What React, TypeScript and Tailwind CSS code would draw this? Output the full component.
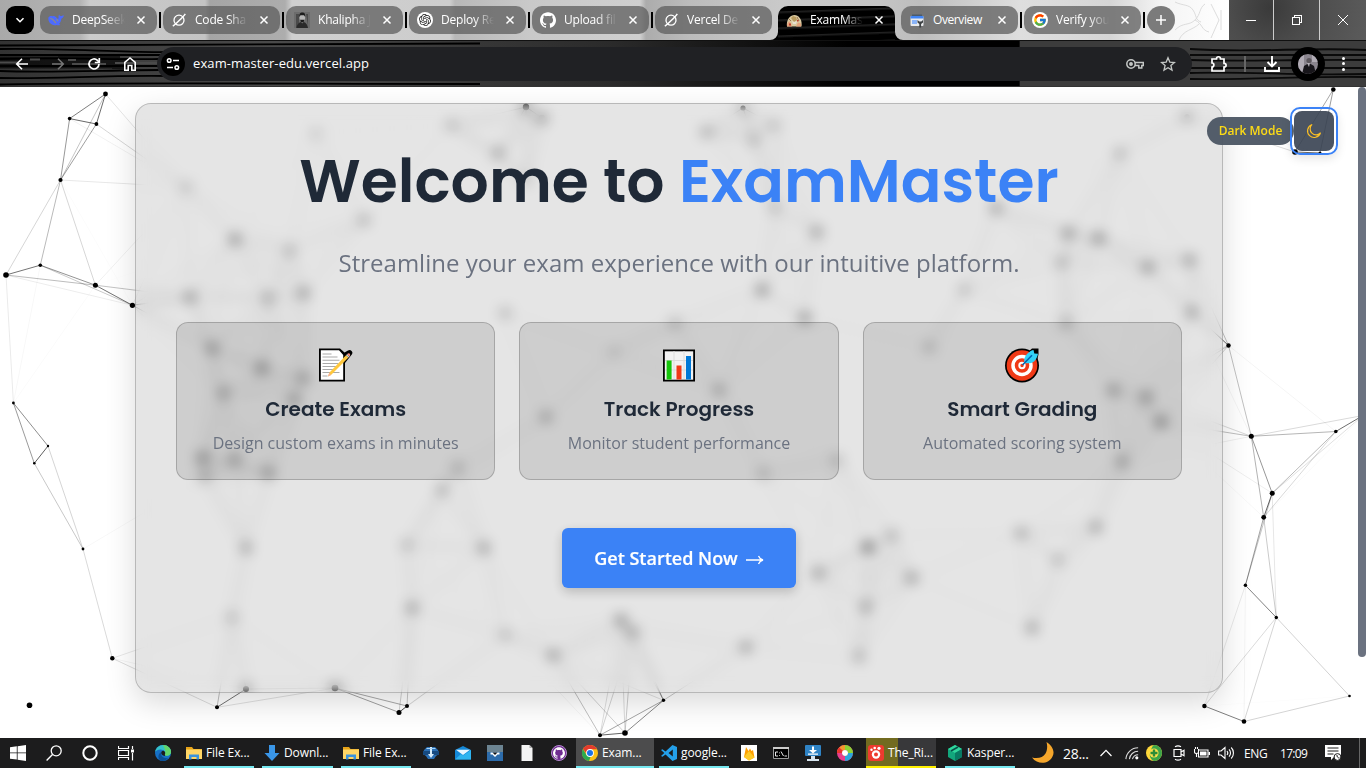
import React from "react";
import { SiGithub, SiOpenai } from "react-icons/si";
import { FcGoogle } from "react-icons/fc";

/* ---------- particle network ---------- */

type P = [number, number, number];

const points: P[] = [
  [105.5, 94, 2.4], [69.6, 118.6, 1.8], [96.4, 124, 1.9], [60.5, 180, 2.1], [6, 275, 2.8],
  [40.3, 265.2, 1.8], [95.4, 285.2, 2.5], [132.4, 305.3, 2.6], [13.4, 403, 1.4], [48, 446, 1.2],
  [34.3, 463.3, 1.3], [83, 549, 1.4], [112.3, 658.3, 2.2], [217, 707.3, 2], [399, 712.4, 2.5],
  [407, 706, 2], [600, 735.2, 2], [625, 733, 2.8], [663.5, 700.3, 1.7], [1204.4, 706, 2.2],
  [1244, 721.5, 2.3], [1349.5, 696, 1.3], [1276.3, 617.5, 1.7], [1245.4, 585.3, 1.7], [1263.7, 517.3, 2.4],
  [1272.2, 493.2, 2.5], [1251.3, 436.3, 2.5], [1335.8, 431.5, 1.8], [1363, 415.5, 2.4], [1228.5, 345.5, 2.2],
  [1333.3, 89.5, 2.3], [1295, 152, 2.8], [1320, 153, 1.5],
  [186, 187, 1.6], [235, 239, 2.8], [316, 133, 1.4], [451, 125, 1.8], [526, 107, 2.6], [542, 118, 2.6],
  [498, 153, 2.4], [364, 220, 2.1], [290, 250, 1.9], [190, 297, 2.6], [268, 298, 2.2], [304, 293, 2.6],
  [212, 348, 2.6], [262, 368, 3], [304, 378, 2.5], [223, 393, 2.5], [295, 400, 2.5], [505, 313, 2],
  [526, 180, 1.6], [675, 323, 2], [614, 352, 1.5], [706, 132, 2.2], [743, 108, 2], [775, 125, 1.6],
  [754, 140, 1.9], [775, 208, 1.8], [817, 232, 2.6], [762, 290, 3], [805, 318, 3], [996, 208, 2.6],
  [1068, 233, 2.7], [1099, 238, 2.9], [1061, 263, 1.9], [1148, 267, 2.8], [1190, 260, 2.6], [1120, 153, 2],
  [1187, 117, 2.1], [1192, 312, 2.6], [1066, 323, 2.2], [964, 290, 1.8], [929, 347, 2], [719, 390, 2.4],
  [1113, 390, 2.6], [1146, 397, 2.8], [202, 458, 2.8], [235, 460, 2.5], [269, 473, 2.6], [204, 477, 2],
  [458, 467, 2], [442, 490, 2.2], [246, 548, 2.5], [232, 617, 1.9], [412, 608, 2.6], [407, 545, 1.9],
  [484, 548, 2.6], [621, 620, 2.9], [633, 632, 2.5], [553, 655, 2.7], [505, 635, 1.8], [246, 689, 2.4],
  [335, 688, 2.7], [546, 417, 2.5], [868, 547, 3.6], [892, 535, 2], [818, 573, 2.6], [912, 578, 2.6],
  [866, 607, 2.5], [859, 657, 2.2], [746, 647, 2.6], [1021, 533, 2.3], [1058, 560, 2], [1096, 527, 2.6],
  [1032, 628, 2.6], [1122, 462, 2.6], [1161, 422, 3.2], [763, 473, 1.9], [837, 460, 1.9],
];

const REACH = 150;

const inPanel = ([x, y]: P) => x > 135 && x < 1223 && y < 693;

const links = points.flatMap((a, i) =>
  points.slice(i + 1).flatMap((b) => {
    const d = Math.hypot(a[0] - b[0], a[1] - b[1]);
    const strength = inPanel(a) && inPanel(b) ? 0.5 : 0.75;
    return d < REACH ? [{ a, b, o: Math.pow(1 - d / REACH, 1.15) * strength }] : [];
  })
);

function Network() {
  return (
    <svg className="absolute inset-0 size-full" viewBox="0 87 1366 651" aria-hidden>
      {links.map(({ a, b, o }, i) => (
        <line key={i} x1={a[0]} y1={a[1]} x2={b[0]} y2={b[1]} stroke="#000" strokeOpacity={o} />
      ))}
      <circle cx={29.5} cy={705.3} r={2.8} />
      {points.map((p, i) => (
        <circle key={i} cx={p[0]} cy={p[1]} r={inPanel(p) ? p[2] + 0.6 : p[2]} />
      ))}
    </svg>
  );
}

/* ---------- browser tabs ---------- */

function Orbit() {
  return (
    <svg viewBox="0 0 16 16" className="size-4" fill="none" stroke="#fff" strokeWidth="1.3">
      <circle cx="8" cy="8.2" r="5" />
      <path d="M1.8 14.2C4 13 12.500 4.500 14.300 1.800" strokeWidth="1.5" />
    </svg>
  );
}
function Whale() {
  return (
    <svg viewBox="0 0 16 16" className="size-4" fill="#4d6bfe">
      <path d="M.4 5.600C1 4 3 3.600 4.600 4.200 6 3.800 7.500 4.400 8.600 5.800c1 1.200 1.700 1 2.100.4-.6-1.500 0-2.900.6-3.600.2 1 .9 1.500 1.600 1.500 1-.1 1.600-.7 2.900-.8-.1 1.600-1.200 3-2.500 3.500-.1 2.100-.9 3.800-2.200 5.100l1.300.9c-1.400.9-2.700.5-3.500.1C5.700 13.900 2.600 12.600 1.200 10 .4 8.600.2 7 .4 5.600z" />
      <path d="M2.300 6.300c2.500.2 4 2.500 5.600 4.800M8.400 7.400c.9.3 1.500 1 1.600 1.900" stroke="#8b8b8b" strokeWidth="1.200" fill="none" />
    </svg>
  );
}
function Portrait() {
  return (
    <svg viewBox="0 0 16 16" className="size-4">
      <rect width="16" height="16" fill="#6c6c6c" />
      <path d="M2 16V2h3v14M12 2h2v12" fill="#4a4a4a" />
      <ellipse cx="8.300" cy="5.600" rx="2.800" ry="4" fill="#b4b4b4" />
      <path d="M5.300 5C5 1 7 .5 8.500.6c2 0 3 1.400 2.700 4.400L10 3.300H6.500zM6 7.800h4.500L9.600 10H7z" fill="#1c1c1c" />
      <path d="M2.500 16c.3-4 3-5.500 4.500-6l1.200 1.500L9.700 10c2.500.8 4 3 4.300 6z" fill="#2a2a2a" />
    </svg>
  );
}
function Dome() {
  return (
    <svg viewBox="0 0 16 16" className="size-4">
      <path d="M1 14.500C0 8 4 3 8.500 3 13 3 16.500 8 15.500 14.500z" fill="#d8c9a0" />
      <path d="M1 14.500c0-4 1.500-5 3-5l2 5zM10 14.500l2-4 3 1v3z" fill="#e3a27c" />
      <path d="M5 6l2-2 3 1 1 3-3 2z" fill="#b79a5e" />
      <path d="M6 9l2 1 3-1-1 3H7z" fill="#e7e0d0" />
      <path d="M3 7l2 2M11 5l2 4" stroke="#8c5b3a" strokeWidth=".8" />
      <path d="M3 11.500h2v2H3zM11 8h1.500v1.500H11z" fill="#c0392b" />
    </svg>
  );
}
function Console() {
  return (
    <svg viewBox="0 0 16 16" className="size-4">
      <path d="M3 2.500h10V5H3z" fill="#4a5b6c" />
      <rect x="1.500" y="4" width="13" height="10" rx="1" fill="#e8eaed" />
      <path d="M1.500 5a1 1 0 011-1h11a1 1 0 011 1v1.500h-13z" fill="#4285f4" />
      <rect x="3" y="8" width="5" height="4" fill="#8ab4f8" />
      <path d="M8.500 8v2.500L10.300 12v3.500h1.800V12l1.900-1.500V8l-1.700 1.500h-2z" fill="#3c4043" />
    </svg>
  );
}
const tabs: { title: string; icon: React.ReactNode; active?: boolean }[] = [
  { title: "DeepSeek", icon: <Whale /> },
  { title: "Code Sha", icon: <Orbit /> },
  { title: "Khalipha J", icon: <Portrait /> },
  {
    title: "Deploy Re",
    icon: (
      <span className="flex size-4 items-center justify-center rounded-full bg-white">
        <SiOpenai className="size-3 text-[#222]" />
      </span>
    ),
  },
  { title: "Upload fil", icon: <SiGithub className="size-4 text-white" /> },
  { title: "Vercel De", icon: <Orbit /> },
  { title: "ExamMas", icon: <Dome />, active: true },
  { title: "Overview", icon: <Console /> },
  {
    title: "Verify you",
    icon: (
      <span className="flex size-4 items-center justify-center rounded-full bg-white">
        <FcGoogle className="size-3.5" />
      </span>
    ),
  },
];

function TabStrip() {
  return (
    <div className="flex h-10 bg-[linear-gradient(90deg,#a9a9a9_0,#b4b4b4_80px,#cbcbcb_90px,#c4c4c4_205px,#a5a5a5_210px,#adadad_285px,#cfcfcf_292px,#cdcdcd_450px,#b8b8b8_455px,#c9c9c9_530px,#cfcfcf_640px,#acacac_646px,#bcbcbc_690px,#c9c9c9_780px,#c4c4c4_880px,#bdbdbd_920px,#dedede_1020px,#d5d5d5_1110px,#f4f4f4_1160px,#fff_1229px)] pl-1.5">
      <div className="mt-1.5 flex size-7 items-center justify-center rounded-[9px] bg-black">
        <svg viewBox="0 0 10 10" className="size-2.5" fill="none" stroke="#fff" strokeWidth="1.600"><path d="M1.500 3.300L5 6.700l3.500-3.400" /></svg>
      </div>
      <div className="flex pl-1.5">
        {tabs.map((t, i) => (
          <div key={i} className="flex w-[123px] pt-1.5">
            <div
              className={
                t.active
                  ? "relative flex h-[34px] w-[117px] items-center rounded-t-[10px] bg-[repeating-linear-gradient(178deg,#000_0,#000_5px,#222_6px,#050505_8px)] pb-1.5 pl-2"
                  : "flex h-7 w-[117px] items-center rounded-[10px] bg-[#5d5d5d]/75 pl-2"
              }
            >
              {t.active && (
                <>
                  <svg className="absolute bottom-0 -left-2 size-2" viewBox="0 0 8 8"><path d="M8 0v8H0a8 8 0 008-8z" /></svg>
                  <svg className="absolute -right-2 bottom-0 size-2" viewBox="0 0 8 8"><path d="M0 0v8h8a8 8 0 01-8-8z" /></svg>
                </>
              )}
              {t.icon}
              <span
                className={
                  t.title === "Overview"
                    ? "ml-2 w-[53px] text-[12px] leading-4 tracking-[-0.400px] whitespace-nowrap text-white"
                    : "ml-2 w-[53px] text-[12px] leading-4 tracking-[-0.200px] whitespace-nowrap text-white [mask-image:linear-gradient(90deg,#000_62%,transparent)]"
                }
              >
                {t.title}
              </span>
              <svg viewBox="0 0 10 10" className="ml-[11px] size-2.5" stroke="#fff" strokeWidth="1.500"><path d="M1.500 1.500l7 7M8.500 1.500l-7 7" /></svg>
            </div>
            {i !== 5 && i !== 6 && <div className="mt-1.5 ml-[2px] h-4 w-0.5 bg-black" />}
          </div>
        ))}
      </div>
      <div className="mt-1.5 flex size-7 items-center justify-center rounded-full bg-[#7b7b7b]">
        <svg viewBox="0 0 12 12" className="size-3" stroke="#fff" strokeWidth="1.500"><path d="M6 1v10M1 6h10" /></svg>
      </div>
      <svg className="h-10 w-[54px]" viewBox="0 0 54 40" fill="none" stroke="#d4d4d4" strokeWidth=".8">
        <path d="M0 2c8 4 14 2 18 8s2 10 8 12M0 30c8-8 14-4 20-10s4-12 10-16M4 40c4-10 14-10 20-16M20 20c8 4 6 10 14 12M36 4l8 16-8 18M46 10v20" />
      </svg>
      <div className="flex flex-1 bg-[radial-gradient(circle_at_30%_20%,#3a3a3a,#4c4c4c_40%,#5b5b5b)]">
        <div className="flex w-[45px] items-center justify-center border-r border-[#ccc]"><div className="h-px w-2.5 bg-white" /></div>
        <div className="flex w-[46px] items-center justify-center border-r border-[#ccc]">
          <svg viewBox="0 0 10 10" className="size-2.5" fill="none" stroke="#fff" shapeRendering="crispEdges"><path d="M.5 2.500h7v7h-7zM2.500 2.500v-2h7v7h-2" /></svg>
        </div>
        <div className="flex flex-1 items-center justify-center">
          <svg viewBox="0 0 10 10" className="size-2.5" stroke="#fff"><path d="M0 0l10 10M10 0L0 10" /></svg>
        </div>
      </div>
    </div>
  );
}

function Streaks() {
  return (
    <svg className="absolute inset-0 size-full" viewBox="0 0 1366 47" preserveAspectRatio="none" fill="none">
      <defs>
        <linearGradient id="metal">
          <stop offset="0" stopColor="#333" />
          <stop offset=".2" stopColor="#4a4a4a" />
          <stop offset=".45" stopColor="#2a2a2a" />
          <stop offset=".62" stopColor="#000" />
          <stop offset=".746" stopColor="#000" />
          <stop offset=".747" stopColor="#3c3c3c" />
          <stop offset="1" stopColor="#3c3c3c" />
        </linearGradient>
      </defs>
      <rect width="1366" height="47" fill="url(#metal)" />
      <path d="M0 .5h1366" stroke="#111" />
      <path d="M0 5.500C80 5 200 4 480 3.500M0 9c70-1 120 4 170 3M0 15h160M0 19c60-2 120 1 160 0M0 26h160M0 31c50 2 110-1 160-1M0 38c60 1 100-3 170-2M0 44.500c80-2 200-1 480-.5" stroke="#000" strokeWidth="1.800" />
      <path d="M0 16.500h60v12H0M58 15.500h62v13H58M112 18h22v11h-22" fill="#000" opacity=".65" />
      <path d="M0 22.500h18M30 19.500h10M68 20h8M72 24h34M115 23h46" stroke="#4a4a4a" strokeWidth="2" />
      <path d="M1190 9c60 4 120-2 176 1M1190 15h176M1190 20c60 2 120-1 176 0M1190 28h176M1190 33c60-2 100 3 176 1M1190 39c50 1 110-3 176-2" stroke="#0a0a0a" strokeWidth="1.800" />
    </svg>
  );
}

function Toolbar() {
  return (
    <div className="relative flex h-[47px] items-center bg-[#222]">
      <Streaks />
      <div className="relative flex w-full items-center">
        <div className="flex w-[157px] items-center gap-5 pl-3.5 text-white">
          <svg viewBox="0 0 16 16" className="size-4" fill="none" stroke="currentColor" strokeWidth="1.600"><path d="M14 8H3M8 2.700L2.700 8 8 13.300" /></svg>
          <svg viewBox="0 0 16 16" className="size-4" fill="none" stroke="#777" strokeWidth="1.500"><path d="M2 8h11M8 2.700L13.300 8 8 13.300" /></svg>
          <svg viewBox="0 0 16 16" className="size-4" fill="none" stroke="currentColor" strokeWidth="1.700"><path d="M13 8a5 5 0 11-1.500-3.600L13 6" /><path d="M13.300 2v4.500H8.800" /></svg>
          <svg viewBox="0 0 16 16" className="size-4" fill="none" stroke="currentColor" strokeWidth="1.600"><path d="M2.800 6.300L8 2l5.200 4.300v8H9.800V9.500H6.200v4.800H2.800z" /></svg>
        </div>
        <div className="flex h-[34px] w-[1035px] items-center rounded-full bg-[#202124] pl-1">
          <div className="flex size-6 items-center justify-center rounded-full bg-black">
            <svg viewBox="0 0 16 16" className="size-4" fill="none" stroke="#fff" strokeWidth="1.500"><circle cx="4.200" cy="4.500" r="1.800" /><path d="M8 4.500h6M2 11.500h6" /><circle cx="11.800" cy="11.500" r="1.800" /></svg>
          </div>
          <span className="ml-2 w-[933px] text-[13px] tracking-[0.100px] text-white">exam-master-edu.vercel.app</span>
          <svg viewBox="0 0 18 12" className="h-3 w-[18px]" fill="none" stroke="#c4c7c5" strokeWidth="1.500"><circle cx="5" cy="6" r="4.200" /><circle cx="5" cy="6" r="1.200" fill="#c4c7c5" /><path d="M9 4.500h8.300v3h-1.500V10h-3V7.500H9" /></svg>
          <svg viewBox="0 0 16 16" className="ml-4 size-4" fill="none" stroke="#c4c7c5" strokeWidth="1.300"><path d="M8 1.800l1.800 4.300 4.700.4-3.600 3 1.100 4.600L8 11.700l-4 2.400 1.100-4.600-3.600-3 4.700-.4z" /></svg>
        </div>
        <svg viewBox="0 0 18 18" className="ml-[18px] size-[18px]" fill="none" stroke="#fff" strokeWidth="1.700"><path d="M2 4h4.500c0-3 4-3 4 0H14v4.300c2.800 0 2.800 3.700 0 3.700v4H2v-4c2.500 0 2.500-4 0-4z" /></svg>
        <div className="ml-4 h-4 w-0.5 bg-[#666]" />
        <svg viewBox="0 0 18 18" className="ml-[17px] size-[18px]" fill="none" stroke="#fff" strokeWidth="1.900"><path d="M9 1v10M4.500 7L9 11.500 13.500 7M2 12v4h14v-4" /></svg>
        <div className="ml-2.5 flex size-[34px] items-center justify-center rounded-full bg-black">
          <svg viewBox="0 0 20 20" className="size-5 rounded-full">
            <rect width="20" height="20" fill="#8a858e" />
            <path d="M0 0h6v20H0zM14 0h6v8h-6z" fill="#b0abb4" />
            <circle cx="11" cy="6.500" r="2.600" fill="#5b565c" />
            <path d="M4 20l2-8 5-3 5 3 2 8z" fill="#17151a" />
            <path d="M9 9l2 4 1-4z" fill="#b5b0b8" />
          </svg>
        </div>
        <div className="ml-[17px] flex flex-col gap-[2.500px]">
          <i className="size-[3px] rounded-full bg-white" /><i className="size-[3px] rounded-full bg-white" /><i className="size-[3px] rounded-full bg-white" />
        </div>
      </div>
      <div className="absolute inset-x-0 bottom-0 h-px bg-[#333]" />
    </div>
  );
}

/* ---------- page ---------- */

function Memo() {
  return (
    <svg viewBox="0 0 36 36" className="size-9">
      <path d="M1 1.500h21l4.500 4L30 3.500a2.800 2.800 0 013.800 4L27 16v18.500H1z" fill="#000" />
      <path d="M2.800 3.300H21L25.200 8v24.800H2.800z" fill="#fff" />
      <path d="M4.500 7h9M4.500 10h15M4.500 13.200h17M4.500 16.500h16M4.500 19.500h14M4.500 22.500h12M4.500 25.500h17M4.500 29h5" stroke="#a9a9a9" strokeWidth="1.100" />
      <path d="M10 29.500l1.300-3.800L28 8.300l2.400 2.300L13 28z" fill="#ffc83d" />
      <path d="M10 29.500l1.300-3.800L13 28z" fill="#f3ad9d" />
      <path d="M28 8.300l1.200-1.200 2.400 2.300-1.200 1.200z" fill="#ccc" />
      <path d="M29.200 7.100c2-2 4 .5 2.400 2.300z" fill="#f88f80" />
    </svg>
  );
}
function Bars() {
  return (
    <svg viewBox="0 0 36 36" className="size-9">
      <rect x="2" y="2.500" width="32" height="32" fill="#000" />
      <rect x="3.800" y="4.300" width="28.400" height="28.400" fill="#f2f2f2" />
      <path d="M4 13.500h28M4 23h28M13 4v28M23 4v28" stroke="#dcdcdc" />
      <path d="M5.600 13.500h5v19h-5z" fill="#16c60c" />
      <path d="M15.500 18.500h5v14h-5z" fill="#f03a17" />
      <path d="M25 9h5v23.500h-5z" fill="#0078d7" />
    </svg>
  );
}
function Target() {
  return (
    <svg viewBox="0 0 36 36" className="size-9">
      <circle cx="18" cy="18.500" r="17" />
      <path d="M23 6l5-4.500h6.500V7l-2 10-8-2z" />
      <circle cx="18" cy="18.500" r="15.300" fill="#f03a17" />
      <circle cx="18" cy="18.500" r="9" fill="none" stroke="#fff" strokeWidth="3.500" />
      <circle cx="18" cy="18.500" r="2.700" fill="#f03a17" stroke="#fff" strokeWidth="2" />
      <path d="M20.500 16c-1-4 1-7.500 3-9.500 2-2 4.500-3.300 6-3.500l.8 3.500 3.700.3c-.5 3-2 6-4 7.700-2.500 2-6 2-9.500 1.500z" fill="#31d2f7" />
      <path d="M18.500 18L28 8.300" stroke="#0063b1" strokeWidth="1.600" />
    </svg>
  );
}

const features = [
  { icon: <Memo />, title: "Create Exams", text: "Design custom exams in minutes" },
  { icon: <Bars />, title: "Track Progress", text: "Monitor student performance" },
  { icon: <Target />, title: "Smart Grading", text: "Automated scoring system" },
];

function Page() {
  return (
    <main className="relative flex h-[651px] overflow-hidden bg-white pt-4 pl-[135px]">
      <Network />
      <section className="relative flex h-[590px] w-[1088px] flex-col items-center rounded-2xl border border-black/20 bg-black/10 px-10 shadow-[0_10px_30px_rgba(0,0,0,0.15)] backdrop-blur-[7px]">
        <h1 className="mt-[37px] h-20 font-['Poppins','Inter',sans-serif] text-[60px] leading-20 font-semibold whitespace-nowrap text-[#1f2937]">
          Welcome to <span className="text-[#3b82f6]">ExamMaster</span>
        </h1>
        <p className="mt-6 h-9 text-[24px] leading-9 whitespace-nowrap text-[#6b7280]">
          Streamline your exam experience with our intuitive platform.
        </p>
        <div className="mt-[41px] grid w-full grid-cols-3 gap-6">
          {features.map((f) => (
            <article key={f.title} className="flex h-[158px] flex-col items-center rounded-xl border border-black/20 bg-black/10 pt-6">
              {f.icon}
              <h3 className="mt-3 font-['Poppins','Inter',sans-serif] text-[20px] leading-7 font-semibold text-[#1f2937]">{f.title}</h3>
              <p className="mt-2 text-[16px] leading-6 text-[#6b7280]">{f.text}</p>
            </article>
          ))}
        </div>
        <button className="mt-12 flex h-[60px] w-[234px] items-center justify-center gap-2 rounded-md bg-[#3b82f6] text-[18px] font-semibold text-white shadow-[0_4px_12px_rgba(0,0,0,0.200)]">
          <span className="[-webkit-text-stroke:0.200px_#fff]">Get Started Now</span>
          <svg viewBox="0 0 18 10" className="mt-1 h-2.5 w-[18px]" fill="none" stroke="#fff" strokeWidth="1.300"><path d="M0 5h16.500M12.500 1c1 2.500 2.500 3.500 4.500 4-2 .5-3.500 1.500-4.500 4" /></svg>
        </button>
      </section>
      <div className="absolute top-5 right-7 flex items-center">
        <span className="flex h-7 w-[87px] items-center justify-center rounded-full bg-[#4b5563]/95 text-[12px] font-semibold whitespace-nowrap text-[#fddb16]">Dark Mode</span>
        <div className="-ml-1 rounded-[10px] border-2 border-[#3b82f6] p-0.5 shadow-[0_4px_10px_rgba(0,0,0,0.100)]">
          <div className="flex size-10 items-center justify-center rounded-lg bg-[#374151]/90">
            <svg viewBox="0 0 16 16" className="size-4" fill="none" stroke="#fbbf24" strokeWidth="1.200" strokeLinejoin="round"><path d="M5.800 1.700a6.600 6.600 0 108.600 8.300A5.700 5.700 0 015.800 1.700z" /></svg>
          </div>
        </div>
      </div>
      <div className="absolute top-0 right-0 h-[570px] w-2 rounded bg-[#6b7280]" />
    </main>
  );
}

/* ---------- taskbar ---------- */

const Svg = ({ children, className = "size-4" }: { children: React.ReactNode; className?: string }) => (
  <svg viewBox="0 0 16 16" className={"shrink-0 " + className} fill="none">{children}</svg>
);

function Folder() {
  return (
    <Svg>
      <path d="M0 2h6l1.500 2H16v3H0z" fill="#e8a317" />
      <path d="M0 4.500h16V14H0z" fill="#ffd666" />
      <path d="M3 14.500V9.500h10v5h-2.500V12h-5v2.500z" fill="#3b93dc" />
    </Svg>
  );
}

function TaskItem({ icon, label, className }: { icon: React.ReactNode; label: string; className: string }) {
  return (
    <div className={"flex h-full items-center gap-1 border-b-2 pt-0.5 pl-0.5 text-[12px] tracking-[-0.100px] whitespace-nowrap " + className}>
      {icon}
      <span>{label}</span>
    </div>
  );
}

function Taskbar() {
  return (
    <footer className="flex h-[30px] items-center bg-[#1c1c1d] pl-2.5 text-white">
      <Svg><path d="M0 2.200l6.800-.9v6.200H0zM7.600 1.200L16 0v7.500H7.600zM0 8.300h6.800v6.300L0 13.700zM7.600 8.300H16V16l-8.400-1.200z" fill="#fff" /></Svg>
      <Svg className="ml-5 size-4"><circle cx="10.200" cy="5.800" r="5" stroke="#fff" strokeWidth="1.300" /><path d="M6.500 9.500L.6 15.400" stroke="#fff" strokeWidth="1.400" /></Svg>
      <Svg className="ml-5 size-4"><circle cx="8" cy="8" r="6.700" stroke="#fff" strokeWidth="2" /></Svg>
      <Svg className="ml-5 size-4"><path d="M.5 1v2.500h10V1M.5 15v-2.500h10V15M.5 5.500h10v5H.5zM14.500 1v3M14.500 8v7.500" stroke="#fff" strokeWidth="1.200" /><path d="M13 4.500h3v3h-3z" fill="#fff" /></Svg>
      <Svg className="ml-[21px] size-4">
        <circle cx="8" cy="8" r="8" fill="#1670c6" />
        <path d="M.1 7C.8 3 4 0 8 0c5 0 8 3.500 8 6.800 0 2.700-2 3.900-4 3.900-1.500 0-2.600-.6-2.200-1.300C11 7.500 9 4.500 5.500 4.500 3 4.500 1 5.500.1 7z" fill="#35c1c9" />
        <path d="M8 0c5 0 8 3.500 8 6.800 0 2.700-2 3.900-4 3.900-1.500 0-2.600-.6-2.200-1.300C11 7 10 4 8 0z" fill="#63d66b" />
        <path d="M6.500 7C5 10 7.500 14 13 13c-2 2.800-5 3.300-7 2.700C2 14 3 8 6.500 7z" fill="#0c4f96" />
        <path d="M9.800 9.400C10.600 8 10.300 6.800 9 6c-1.500-.5-3 .5-2.700 2.500.5 1.500 2 2.500 4 2.500z" fill="#1c1c1d" />
      </Svg>
      <TaskItem className="ml-[13px] w-[70px] border-[#76e8f0]" icon={<Folder />} label="File Ex..." />
      <TaskItem className="ml-2 w-[71px] border-[#76e8f0]" icon={<Svg><path d="M5 0h6v8h4.500L8 16 .5 8H5z" fill="#3a96e8" /></Svg>} label="Downl..." />
      <TaskItem className="ml-2 w-[70px] border-[#76e8f0]" icon={<Folder />} label="File Ex..." />
      <Svg className="ml-3 size-4"><path d="M1 5l3-3h8l3 3 1 4-3 2-2 3H5l-2-3-3-2z" fill="#2a6fb5" /><path d="M0 6h16v4H0z" fill="#174a80" /><path d="M7 2h2v7h2l-3 4-3-4h2z" fill="#d7ecfb" /><path d="M3.500 3.500h9" stroke="#a9d4f5" /></Svg>
      <Svg className="ml-4 size-4"><path d="M0 5l8-4 8 4v9.500H0z" fill="#1488d8" /><path d="M1 4.800h14L8 10z" fill="#e9f6ff" /><path d="M0 14.500L6 9l2 1.500L16 5v9.500z" fill="#2fb4f0" /></Svg>
      <Svg className="ml-4 size-4"><rect width="16" height="16" fill="#2d6cab" /><path d="M0 0h16v7H0z" fill="#6c8492" /><path d="M3.500 7.500h9v2h-2L8 12 5.500 9.500h-2z" fill="#fff" /><path d="M5.500 7.500h5L8 10z" fill="#111" /></Svg>
      <Svg className="ml-4 size-4"><path d="M2.500 0h8l3 3v13h-11z" fill="#f4f4f4" /><path d="M10.500 0v3h3z" fill="#aaa" /></Svg>
      <span className="ml-4 flex size-4 items-center justify-center rounded-full border border-[#b68ad0] bg-[#6f2c91]"><SiGithub className="size-3 text-white" /></span>
      <TaskItem
        className="ml-[9px] w-[78px] border-[#76e8f0] bg-[#4c4c4d] !pl-1.5"
        icon={<Svg><circle cx="8" cy="8" r="8" fill="#fbc116" /><path d="M1 4A8 8 0 0115 4.200H8L5 9z" fill="#e33b2e" /><path d="M1 4l3.500 6 4 2L7 16A8 8 0 011 4z" fill="#2da94f" /><circle cx="8" cy="8" r="3.900" fill="#fff" /><circle cx="8" cy="8" r="3" fill="#1a73e8" /></Svg>}
        label="Exam..."
      />
      <TaskItem
        className="ml-[5px] w-[70px] border-[#76e8f0]"
        icon={<Svg><path d="M11.500 0L16 2v12l-4.500 2L4.500 9.500l-3 2.300L0 11l3.300-3L0 5l1.500-.8 3 2.300zM11.800 4.500L7.500 8l4.300 3.500z" fill="#24a0ea" fillRule="evenodd" /></Svg>}
        label="google..."
      />
      <Svg className="ml-3 size-4"><path d="M0 0h16v16H0z" fill="#fff" /><path d="M3 12L5 2l2.500 4L9 3.500l1.500 2.500L12 5l1.500 7.500L8 15.500z" fill="#ffa000" /><path d="M3 12l5-6 5.500 6.500-5.500 3z" fill="#ffca28" /></Svg>
      <Svg className="ml-4 size-4"><path d="M.5 2.500h15v11H.5z" fill="#000" stroke="#9a9a9a" /><path d="M0 2h16v2H0z" fill="#ccc" /><path d="M5 7H2.500v4H5M6.500 7.500v.8M6.500 10v.8M8 6.500l2.500 4.500M11.500 11H14" stroke="#fff" strokeWidth=".9" /></Svg>
      <Svg className="ml-4 size-4"><rect width="16" height="11" rx="1" fill="#2f83c5" /><path d="M2 14h12v2H2zM6 11h4v3H6z" fill="#d7e4ee" /><path d="M7 1.500h2V5h3L8 8.500 4 5h3zM3 8.500h10v1.300H3z" fill="#fff" /></Svg>
      <Svg className="ml-4 size-4">
        <circle cx="8" cy="8" r="5.500" stroke="#e83e8c" strokeWidth="5" />
        <path d="M8 2.500A5.500 5.500 0 0113.500 8" stroke="#8bd334" strokeWidth="5" />
        <path d="M13.500 8A5.500 5.500 0 018 13.500" stroke="#2aa7dc" strokeWidth="5" />
        <path d="M2.500 8A5.500 5.500 0 018 2.500" stroke="#f2992e" strokeWidth="5" />
        <path d="M2.500 8A5.500 5.500 0 014 4" stroke="#e8352e" strokeWidth="5" />
        <circle cx="8" cy="8" r="3" fill="#fff" />
      </Svg>
      <TaskItem
        className="ml-[13px] w-[70px] border-[#fff100] bg-[linear-gradient(90deg,#726b20_32px,#38383a_32px)]"
        icon={<Svg><rect width="16" height="16" rx="3" fill="#ee3b2f" /><circle cx="8" cy="9.500" r="4.200" fill="#fff" /><circle cx="8" cy="9.500" r="2" fill="#ee3b2f" /><circle cx="3.500" cy="4.800" r="1.200" fill="#fff" /><circle cx="6.700" cy="3" r="1.300" fill="#fff" /><circle cx="11" cy="3.300" r="1.600" fill="#fff" /></Svg>}
        label="The_Ri..."
      />
      <TaskItem
        className="ml-[9px] w-[70px] border-[#76e8f0]"
        icon={<Svg><path d="M1 4l7-4 7 4v8l-7 4-7-4z" fill="#12a67c" /><path d="M1 4l7-4 7 4-7 4z" fill="#2fd69c" /><path d="M8 8l7-4v8l-7 4z" fill="#087a63" /><path d="M4 6l7-4" stroke="#064f48" strokeWidth="1.500" /></Svg>}
        label="Kasper..."
      />
      <svg viewBox="0 0 22 22" className="ml-[17px] size-[22px] shrink-0"><path d="M14.500 0c5 3 9 9 6 14.500C17 22 6 23.500 0 15.500c6 1.500 11 0 13.500-4 2-3.500 2-8 1-11.500z" fill="#f5a62b" /></svg>
      <span className="ml-[9px] w-[37px] text-[14px] tracking-[-0.300px]">28...</span>
      <Svg className="size-3"><path d="M.7 12L8 4.500 15.300 12" stroke="#fff" strokeWidth="1.700" /></Svg>
      <Svg className="ml-[13px] size-3.5"><path d="M1 15A14 14 0 0115 2M5 15A10 10 0 0115 6M8.500 15A7 7 0 0115 10" stroke="#ddd" strokeWidth="1.200" /><circle cx="13.500" cy="13.500" r="1.800" fill="#fff" /></Svg>
      <Svg className="ml-[7px] size-4"><circle cx="8" cy="8" r="8" fill="#ffd83a" /><path d="M8 0a8 8 0 010 16C5 15 3 11 4 8s2-7 4-8z" fill="#3ca548" /><circle cx="8" cy="8" r="4.500" fill="#ffe04d" /><path d="M8 4.500v7M4.500 8h7" stroke="#2c8c37" strokeWidth="2.400" /></Svg>
      <Svg className="ml-[9px] size-4"><path d="M3 4.500h7v7H3zM10 7l3-1.800v5.600L10 9M4 1.800c2-1.300 4-1.300 6 0M4 14.200c2 1.300 4 1.300 6 0" stroke="#fff" strokeWidth="1.200" /></Svg>
      <Svg className="ml-[7px] size-4"><path d="M4.500 5H14v7H4.500zM2.500 9v3M.5 4v3c0 2 4 2 4 0V4M1.500 4V2M3.500 4V2" stroke="#fff" strokeWidth="1.100" /><path d="M6 6.500h6.500v4H6zM14.500 7H16v3h-1.500z" fill="#fff" /></Svg>
      <Svg className="ml-2 size-4"><path d="M.6 6h2.500L7 2.500v11L3.100 10H.6zM9 6c1 1.200 1 2.800 0 4M11 4.300c2 2 2 5.400 0 7.400M13.200 2.500c3 3 3 8 0 11" stroke="#fff" strokeWidth="1.100" /></Svg>
      <span className="ml-2.5 w-9 pt-0.5 text-[12px] tracking-[-0.300px]">ENG</span>
      <span className="w-[45px] pt-0.5 text-[12px] tracking-[-0.700px]">17:09</span>
      <Svg><path d="M0 0h16v12H9l-3 3v-3H0z" fill="#fff" /><path d="M2.500 3h11M2.500 6h11M2.500 9h6" stroke="#1c1c1d" strokeWidth="1.200" /><circle cx="12.500" cy="12" r="3.400" fill="#fff" stroke="#1c1c1d" /><path d="M12 10a2.500 2.500 0 002.500 3" stroke="#1c1c1d" /></Svg>
      <div className="ml-[18px] h-full w-px bg-[#666]" />
    </footer>
  );
}

export default function App() {
  return (
    <div className="flex h-[768px] w-[1366px] flex-col overflow-hidden font-['Open_Sans','Noto_Sans',sans-serif]">
      <TabStrip />
      <Toolbar />
      <Page />
      <Taskbar />
    </div>
  );
}
